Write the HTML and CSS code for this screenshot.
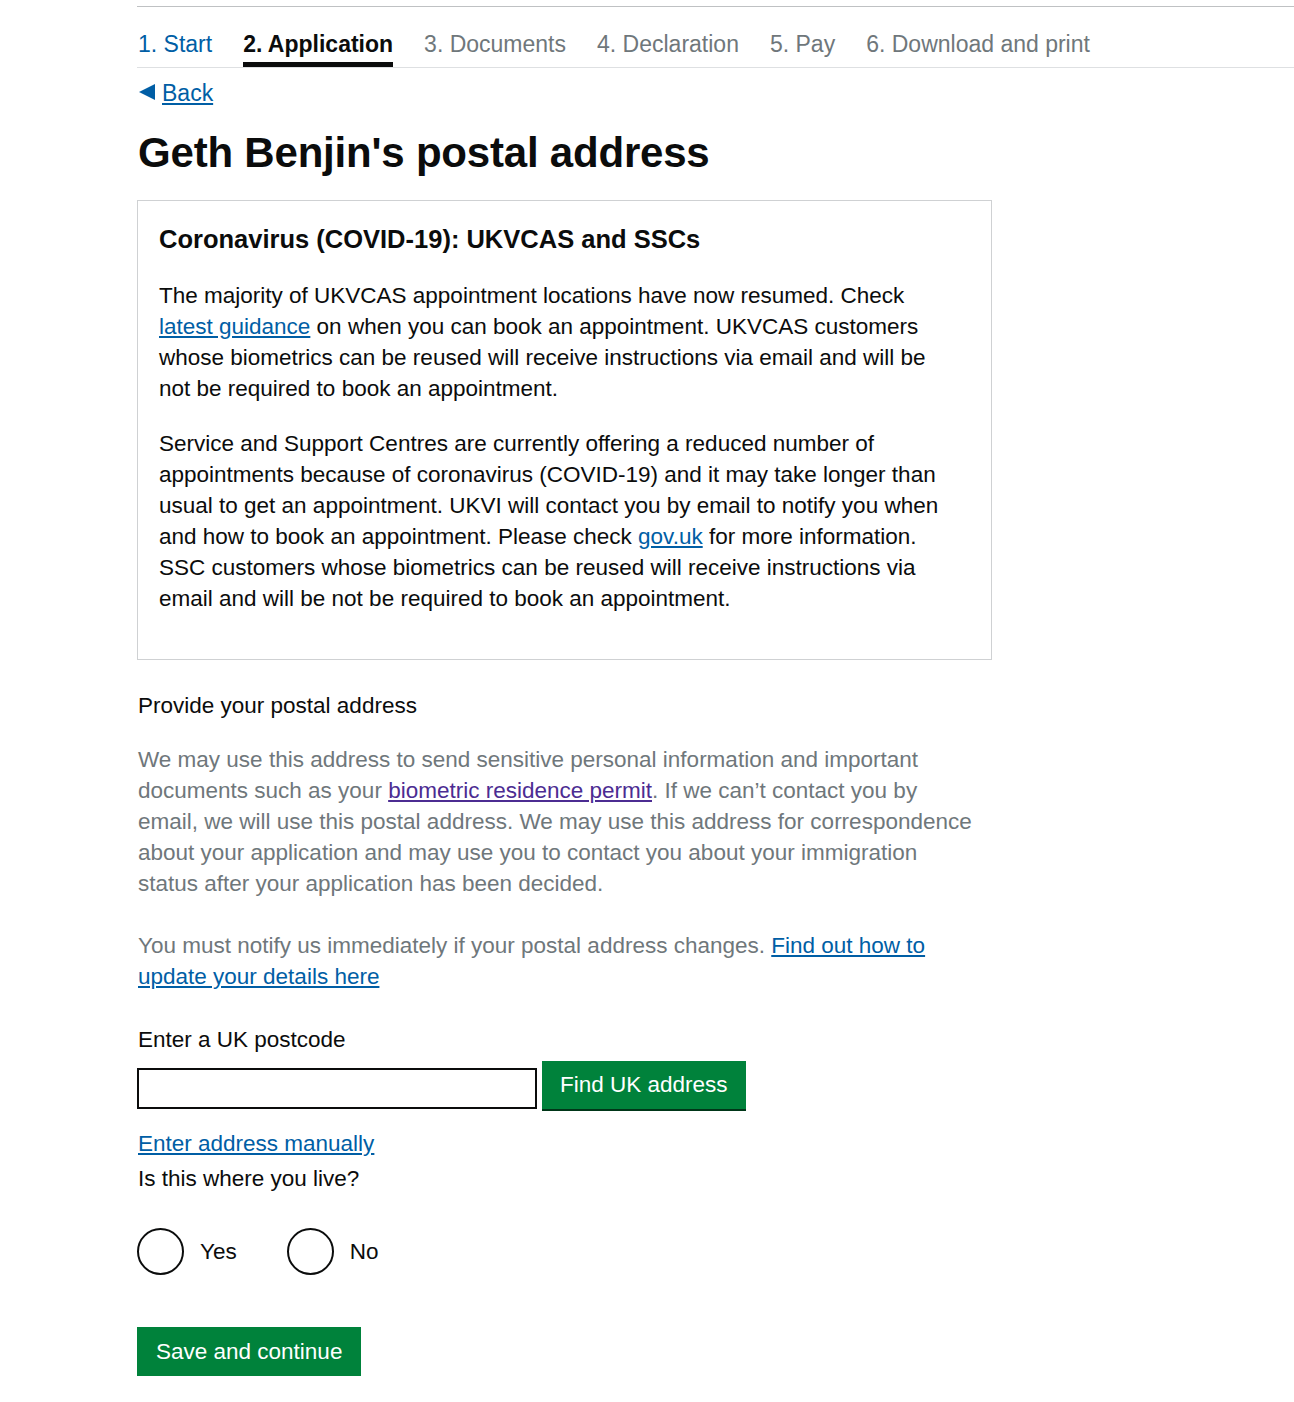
FILE: index.html
```html
<!DOCTYPE html>
<html lang="en">

<head>
    <meta charset="UTF-8">
    <meta name="viewport" content="width=device-width, initial-scale=1.0">
    <title>Postal address</title>
    <link rel="stylesheet" href="styles.css">
</head>

<body>
    <nav class="progress">
        <ul class="steps">
            <li class="step done"><a href="#">1. Start</a></li>
            <li class="step active">2. Application</li>
            <li class="step">3. Documents</li>
            <li class="step">4. Declaration</li>
            <li class="step">5. Pay</li>
            <li class="step">6. Download and print</li>
        </ul>
    </nav>

    <main class="content">
        <a href="#" class="back-link">Back</a>

        <h1 class="page-title">Geth Benjin's postal address</h1>

        <div class="notice">
            <h2 class="notice-title">Coronavirus (COVID-19): UKVCAS and SSCs</h2>
            <p>The majority of UKVCAS appointment locations have now resumed. Check
                <a href="#">latest guidance</a> on when you can book an appointment. UKVCAS customers
                whose biometrics can be reused will receive instructions via email and will be
                not be required to book an appointment.</p>
            <p>Service and Support Centres are currently offering a reduced number of
                appointments because of coronavirus (COVID-19) and it may take longer than
                usual to get an appointment. UKVI will contact you by email to notify you when
                and how to book an appointment. Please check <a href="#">gov.uk</a> for more information.
                SSC customers whose biometrics can be reused will receive instructions via
                email and will be not be required to book an appointment.</p>
        </div>

        <p class="lead">Provide your postal address</p>

        <p class="hint">We may use this address to send sensitive personal information and important
            documents such as your <a href="#" class="visited">biometric residence permit</a>. If we can’t contact you by
            email, we will use this postal address. We may use this address for correspondence
            about your application and may use you to contact you about your immigration
            status after your application has been decided.</p>

        <p class="hint">You must notify us immediately if your postal address changes. <a href="#">Find out how to
            update your details here</a></p>

        <label class="label" for="postcode">Enter a UK postcode</label>
        <div class="postcode-row">
            <input type="text" id="postcode" class="input">
            <button class="button">Find UK address</button>
        </div>

        <a href="#" class="manual-link">Enter address manually</a>
        <p class="question">Is this where you live?</p>

        <div class="radios">
            <label class="radio"><input type="radio" name="live"><span class="circle"></span>Yes</label>
            <label class="radio"><input type="radio" name="live"><span class="circle"></span>No</label>
        </div>

        <button class="button save">Save and continue</button>
    </main>
</body>

</html>
```

FILE: styles.css
```css
body {
    font-family: "Liberation Sans", Arial, sans-serif;
    color: #0b0c0c;
    margin: 0;
    padding-top: 6px;
    background: #fff;
}

a {
    color: #005ea5;
}

.progress {
    margin-left: 137px;
    border-top: 1px solid #bfc1c3;
}

.steps {
    display: flex;
    gap: 31px;
    list-style: none;
    margin: 0;
    padding: 0 0 0 1px;
    border-bottom: 1px solid #dee0e2;
}

.step {
    font-size: 23px;
    line-height: 28px;
    padding: 23px 0 4px;
    border-bottom: 5px solid transparent;
    color: #6f777b;
}

.step a {
    text-decoration: none;
}

.step.active {
    color: #0b0c0c;
    font-weight: bold;
    border-bottom-color: #0b0c0c;
}

.content {
    margin-left: 137px;
    width: 854px;
    display: flex;
    flex-direction: column;
    align-items: flex-start;
}

.back-link {
    display: flex;
    align-items: center;
    gap: 7px;
    margin-top: 10px;
    margin-left: 2px;
    font-size: 23px;
    line-height: 30px;
}

.back-link::before {
    content: "";
    width: 0;
    height: 0;
    border-top: 8px solid transparent;
    border-bottom: 8px solid transparent;
    border-right: 16px solid #005ea5;
    margin-top: -2px;
}

.page-title {
    font-size: 42px;
    line-height: 50px;
    margin: 20px 0 22px 1px;
    letter-spacing: -0.2px;
}

.notice {
    box-sizing: border-box;
    width: 855px;
    border: 1px solid #cfd1d3;
    padding: 23px 21px 21px;
}

.notice-title {
    font-size: 25.5px;
    line-height: 30px;
    margin: 0 0 26px;
}

.notice p {
    max-width: 792px;
    font-size: 22.5px;
    line-height: 31px;
    margin: 0 0 24px;
}

.lead,
.hint,
.question,
.label,
.manual-link {
    font-size: 22.5px;
    line-height: 31px;
    margin: 0;
    margin-left: 1px;
}

.lead {
    margin-top: 30px;
}

.hint {
    max-width: 840px;
    color: #6f777b;
    margin-top: 23px;
}

.hint + .hint {
    margin-top: 31px;
}

.visited {
    color: #4c2c92;
}

.label {
    margin-top: 32px;
}

.postcode-row {
    display: flex;
    align-items: flex-end;
    gap: 5px;
    margin-top: 6px;
}

.input {
    box-sizing: border-box;
    width: 400px;
    height: 41px;
    border: 2px solid #0b0c0c;
    margin: 0;
    font-size: 22px;
}

.button {
    font-family: inherit;
    font-size: 22.5px;
    line-height: 27px;
    color: #fff;
    background: #00823b;
    border: 0;
    margin: 0;
    padding: 10px 18px 11px;
    box-shadow: 0 2px 0 #003618;
    cursor: pointer;
}

.manual-link {
    margin-top: 19px;
}

.question {
    margin-top: 4px;
}

.radios {
    display: flex;
    gap: 50px;
    margin-top: 34px;
}

.radio {
    display: flex;
    align-items: center;
    gap: 16px;
    font-size: 22.5px;
    line-height: 31px;
}

.radio input {
    display: none;
}

.circle {
    box-sizing: border-box;
    width: 47px;
    height: 47px;
    border: 2px solid #0b0c0c;
    border-radius: 50%;
}

.save {
    margin-top: 52px;
    padding: 11px 19px;
}
```
